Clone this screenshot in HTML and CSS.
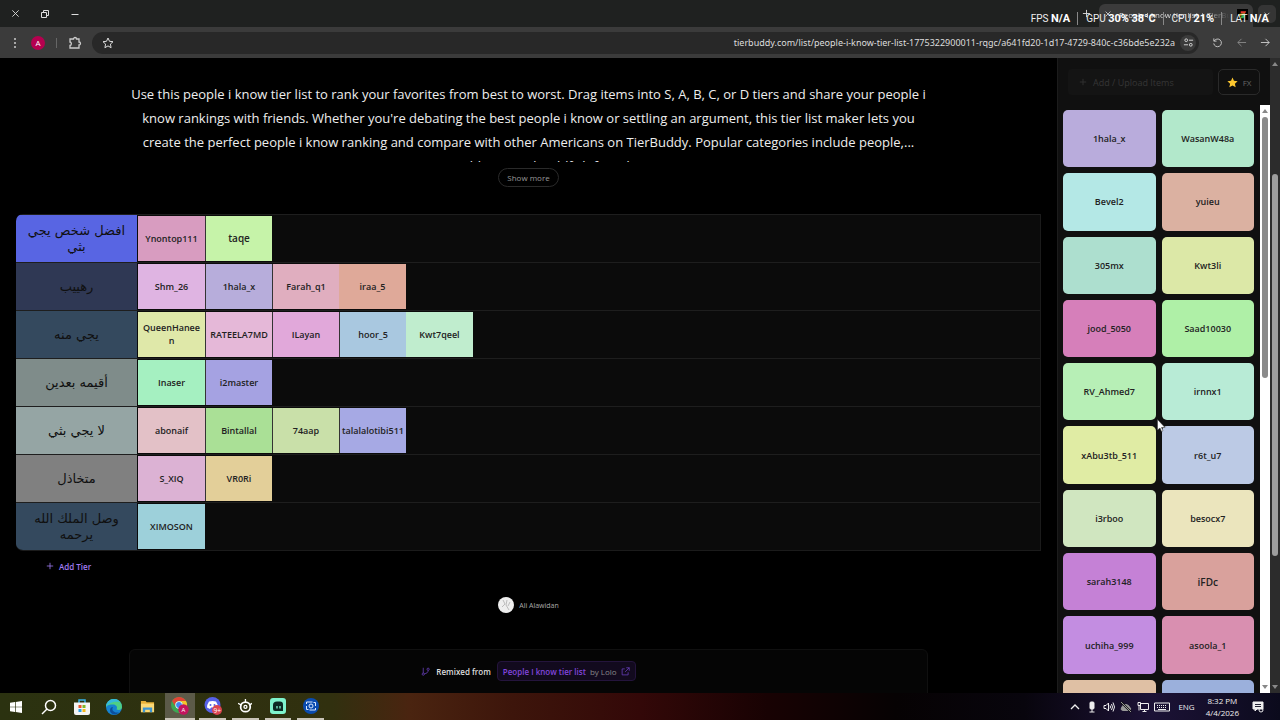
FILE: index.html
```html
<!doctype html>
<html lang="en-US">
  <head>
    <meta charset="utf-8" />
    <title>People I know tier list | TierBuddy</title>
    <link rel="stylesheet" href="styles.css">
  </head>

  <body>
    <header class="titlebar">
      <div class="window-controls">
        <button aria-label="Close"><svg viewBox="0 0 10 10" width="9" height="9"><path d="M1.5 1.5l7 7M8.500 1.500l-7 7"/></svg></button>
        <button aria-label="Restore"><svg viewBox="0 0 10 10" width="10" height="10"><path d="M1.500 3.500h5v5h-5zM3.500 3.500v-2h5v5h-2"/></svg></button>
        <button aria-label="Minimize"><svg viewBox="0 0 10 10" width="10" height="10"><path d="M1.500 5.500h7"/></svg></button>
      </div>
      <div class="tabs">
        <button class="new-tab" aria-label="New tab"><svg viewBox="0 0 10 10" width="9" height="9"><path d="M5 1v8M1 5h8"/></svg></button>
        <div class="tab">
          <button aria-label="Close tab"><svg viewBox="0 0 10 10" width="8" height="8"><path d="M2 2l6 6M8 2l-6 6"/></svg></button>
          <span class="tab-title">People I know tier list | TierBuddy</span>
          <svg class="favicon" viewBox="0 0 12 12" width="11" height="11"><rect width="12" height="12" fill="#000"/><path d="M4 2.500h6l-1 2H4z" fill="#e33b2e"/><path d="M2 5.500l7-1-2 2.500H3z" fill="#f2c12e"/><path d="M5 7l4-1-2 4H4z" fill="#35b04a"/></svg>
        </div>
        <button class="tab-search" aria-label="Search tabs"><svg viewBox="0 0 10 10" width="8" height="8"><path d="M2 3.500l3 3 3-3"/></svg></button>
      </div>
    </header>

    <!-- Performance overlay -->
    <div class="stats">
      <span>FPS <b>N/A</b></span>
      <span>GPU <b>30%</b> <b>38°C</b></span>
      <span>CPU <b>21%</b></span>
      <span>LAT <b>N/A</b></span>
    </div>

    <nav class="toolbar">
      <button aria-label="Menu"><svg viewBox="0 0 12 12" width="12" height="12"><g class="dots"><circle cx="6" cy="2" r="1"/><circle cx="6" cy="6" r="1"/><circle cx="6" cy="10" r="1"/></g></svg></button>
      <button class="profile">A</button>
      <span class="divider"></span>
      <button aria-label="Extensions"><svg viewBox="0 0 14 14" width="14" height="14"><path d="M2 3h3.500c0-2 3-2 3 0H11v3c2 0 2 3 0 3v3H2V9.500c1.800 0 1.800-3.500 0-3.500z" stroke-width="1.300"/></svg></button>
      <div class="address">
        <button aria-label="Bookmark"><svg viewBox="0 0 12 12" width="12" height="12"><path d="M6 1l1.500 3.300 3.500.4-2.600 2.400.7 3.600L6 8.900l-3.100 1.800.7-3.600L1 4.700l3.500-.4z"/></svg></button>
        <input type="text" aria-label="Address" value="tierbuddy.com/list/people-i-know-tier-list-1775322900011-rqgc/a641fd20-1d17-4729-840c-c36bde5e232a">
        <button class="site-info" aria-label="Site information"><svg viewBox="0 0 12 12" width="11" height="11"><circle cx="3.500" cy="3.500" r="1.500"/><circle cx="8.500" cy="8.500" r="1.500"/><path d="M6.500 3.500H11M1 8.500h4.500"/></svg></button>
      </div>
      <button aria-label="Reload"><svg viewBox="0 0 12 12" width="11" height="11"><path d="M2 1.500v3h3M2.300 4.500a4.200 4.200 0 1 1-.4 2.500"/></svg></button>
      <button class="dim" aria-label="Forward"><svg viewBox="0 0 12 12" width="11" height="11"><path d="M11 6H2M6 2L2 6l4 4"/></svg></button>
      <button aria-label="Back"><svg viewBox="0 0 12 12" width="11" height="11"><path d="M1 6h9M6 2l4 4-4 4"/></svg></button>
    </nav>

    <div class="page">
      <main>
        <p class="description">Use this people i know tier list to rank your favorites from best to worst. Drag items into S, A, B, C, or D tiers and share your people i<br>know rankings with friends. Whether you're debating the best people i know or settling an argument, this tier list maker lets you<br>create the perfect people i know ranking and compare with other Americans on TierBuddy. Popular categories include people,...<br>trivia, athletes, and Goldfish friends</p>
        <button class="show-more">Show more</button>

        <div class="tiers">
          <div class="tier">
            <div class="label indigo" lang="ar" dir="rtl">افضل شخص يجي بثي</div>
            <div class="tile" style="background: #d89cc0">Ynontop111</div>
            <div class="tile big" style="background: #c6f3a9">taqe</div>
          </div>
          <div class="tier">
            <div class="label navy" lang="ar" dir="rtl">رهييب</div>
            <div class="tile" style="background: #dfb4e2">Shm_26</div>
            <div class="tile" style="background: #b7addb">1hala_x</div>
            <div class="tile" style="background: #e0aebf">Farah_q1</div>
            <div class="tile joined" style="background: #dfa999">iraa_5</div>
          </div>
          <div class="tier">
            <div class="label steel" lang="ar" dir="rtl">يجي منه</div>
            <div class="tile" style="background: #dfe8a9">QueenHaneen</div>
            <div class="tile" style="background: #e5b8d8">RATEELA7MD</div>
            <div class="tile" style="background: #e1a8da">ILayan</div>
            <div class="tile" style="background: #a9c8e0">hoor_5</div>
            <div class="tile joined" style="background: #c0edce">Kwt7qeel</div>
          </div>
          <div class="tier">
            <div class="label sage" lang="ar" dir="rtl">أقيمه بعدين</div>
            <div class="tile" style="background: #a5f0c1">Inaser</div>
            <div class="tile" style="background: #a5a2e2">i2master</div>
          </div>
          <div class="tier">
            <div class="label mist" lang="ar" dir="rtl">لا يجي بثي</div>
            <div class="tile" style="background: #e3c1c7">abonaif</div>
            <div class="tile" style="background: #aae096">Bintallal</div>
            <div class="tile" style="background: #c9e0a9">74aap</div>
            <div class="tile one-line" style="background: #a6a9e4">talalalotibi511</div>
          </div>
          <div class="tier">
            <div class="label gray" lang="ar" dir="rtl">متخاذل</div>
            <div class="tile" style="background: #dcb2d4">S_XIQ</div>
            <div class="tile" style="background: #e3cf99">VR0Ri</div>
          </div>
          <div class="tier">
            <div class="label steel" lang="ar" dir="rtl">وصل الملك الله يرحمه</div>
            <div class="tile" style="background: #9dd0da">XIMOSON</div>
          </div>
        </div>

        <button class="add-tier"><svg viewBox="0 0 10 10" width="8" height="8"><path d="M5 1v8M1 5h8"/></svg>Add Tier</button>

        <div class="author">
          <svg viewBox="0 0 16 16" width="16" height="16"><circle cx="8" cy="8" r="8" fill="#eee"/><path d="M5 3l2 4-3 3M9 3l-1 5 3 5M12 5l-2 4" stroke="#bbb" fill="none"/></svg>
          <span>Ali Alawidan</span>
        </div>

        <div class="remix">
          <svg class="branch" viewBox="0 0 12 12" width="9" height="9"><path d="M3 1v7M9.500 4.500c0 3-2 4-5 4.500"/><circle cx="3" cy="9.500" r="1.500"/><circle cx="9.500" cy="3" r="1.500"/></svg>
          <span>Remixed from</span>
          <a href="#"><b>People I know tier list</b> by Lolo <svg viewBox="0 0 12 12" width="9" height="9"><path d="M5 2.500H1.500v8h8V7M7 1h4v4M11 1L5.500 6.500"/></svg></a>
        </div>
      </main>

      <aside>
        <div class="actions">
          <button class="upload"><svg viewBox="0 0 10 10" width="8" height="8"><path d="M5 1v8M1 5h8"/></svg>Add / Upload Items</button>
          <button class="fx"><svg viewBox="0 0 12 12" width="11" height="11"><path d="M6 .5l1.600 3.700 4 .4-3 2.700.9 4L6 9.200l-3.500 2.100.9-4-3-2.700 4-.4z"/></svg>FX</button>
        </div>
        <div class="pool">
          <div class="items">
            <div class="item" style="background: #b9acdc">1hala_x</div>
            <div class="item" style="background: #b2e8cb">WasanW48a</div>
            <div class="item" style="background: #b4e8e6">Bevel2</div>
            <div class="item" style="background: #dbb1a1">yuieu</div>
            <div class="item" style="background: #addfcf">305mx</div>
            <div class="item" style="background: #dce8a7">Kwt3li</div>
            <div class="item" style="background: #d67fba">jood_5050</div>
            <div class="item" style="background: #aff0a7">Saad10030</div>
            <div class="item" style="background: #b7efb6">RV_Ahmed7</div>
            <div class="item" style="background: #b8ebd6">irnnx1</div>
            <div class="item" style="background: #e0eca4">xAbu3tb_511</div>
            <div class="item" style="background: #bccae5">r6t_u7</div>
            <div class="item" style="background: #d0e6c0">i3rboo</div>
            <div class="item" style="background: #ebe5bd">besocx7</div>
            <div class="item" style="background: #c581d6">sarah3148</div>
            <div class="item big" style="background: #d9a19c">iFDc</div>
            <div class="item" style="background: #c38de1">uchiha_999</div>
            <div class="item" style="background: #d98fb0">asoola_1</div>
            <div class="item" style="background: #dfc0a4"></div>
            <div class="item" style="background: #9bb0dc"></div>
          </div>
          <div class="scrollbar light"><i class="up"></i><i class="thumb"></i><i class="down"></i></div>
        </div>
      </aside>
      <div class="scrollbar dark"><i class="up"></i><i class="thumb"></i><i class="down"></i></div>
    </div>

    <footer class="taskbar">
      <div class="apps">
        <button aria-label="Start"><svg viewBox="0 0 12 12" width="12" height="12"><path fill="#fff" d="M0 1.800l5-.7v4.600H0zM5.700 1l6.300-.9v5.600H5.700zM0 6.300h5v4.600l-5-.7zM5.700 6.300H12v5.600L5.700 11z"/></svg></button>
        <button aria-label="Search"><svg viewBox="0 0 16 16" width="16" height="16"><circle cx="9.500" cy="6.500" r="5" fill="none" stroke="#fff" stroke-width="1.500"/><path d="M6 10l-5 5" stroke="#fff" stroke-width="1.500"/></svg></button>
        <button aria-label="Store"><svg viewBox="0 0 16 16" width="16" height="16"><path d="M5 4V1h6v3" fill="none" stroke="#39b2e8" stroke-width="1.500"/><path d="M0 3.500h16V14q0 2-2 2H2q-2 0-2-2z" fill="#f4f4f4"/><path fill="#e8532b" d="M4.500 6h3v3h-3z"/><path fill="#7fb927" d="M8.500 6h3v3h-3z"/><path fill="#2a9fe5" d="M4.500 10h3v3h-3z"/><path fill="#f6b81a" d="M8.500 10h3v3h-3z"/></svg></button>
        <button aria-label="Edge"><svg viewBox="0 0 16 16" width="16" height="16"><circle cx="8" cy="8" r="8" fill="#1683d0"/><path d="M0 8a8 8 0 0 1 16 0c0 3-3 3.500-5.500 2.500C12 8 10 5.500 7 5.500S1 6 0 8z" fill="#4fcf85"/><path d="M0 8a8 8 0 0 1 8-8c3 0 5 1.500 6 3C9 2 3 3 0 8z" fill="#35b9dd"/><path d="M7 8c-2 3 1 6 6 5.500-3 3-8 2.500-9-1.500 0-3 1-4 3-4z" fill="#0c4f9c"/></svg></button>
        <button aria-label="File Explorer"><svg viewBox="0 0 16 16" width="15" height="15"><path d="M1 2h5l1 1.500h8V14H1z" fill="#e8b23a"/><path d="M1 5h14v9H1z" fill="#fbd976"/><path d="M3 14V9h10v5h-2.500v-2.500h-5V14z" fill="#3d96d4"/></svg></button>
        <button class="running active" aria-label="Chrome"><svg viewBox="0 0 18 18" width="18" height="18"><circle cx="8" cy="8" r="8" fill="#3da653"/><path d="M1.100 4A8 8 0 0 1 15 4H8a4 4 0 0 0-4 5z" fill="#e24436"/><path d="M15 4a8 8 0 0 1-7 12l3.500-6A4 4 0 0 0 8 4z" fill="#f6c42c"/><circle cx="8" cy="8" r="3.700" fill="#fff"/><circle cx="8" cy="8" r="2.900" fill="#4285f0"/><circle cx="12.500" cy="12.500" r="5.200" fill="#c2145e"/><text x="10.500" y="15" font-size="6" fill="#fff">A</text></svg></button>
        <button class="running" aria-label="Discord"><svg viewBox="0 0 18 18" width="18" height="18"><circle cx="8.500" cy="8" r="8" fill="#5661e8"/><path d="M5 4.500q3.500-1 7 0 2 3 2 6l-3 1.500-1-1.500H7L6 12l-3-1.500q0-3 2-6z" fill="#fff"/><circle cx="6.500" cy="8" r="1" fill="#5661e8"/><circle cx="10.500" cy="8" r="1" fill="#5661e8"/><circle cx="13" cy="13" r="5" fill="#dc4450"/><text x="9.500" y="15.500" font-size="6.500" fill="#fff">9+</text></svg></button>
        <button class="running" aria-label="SteelSeries"><svg viewBox="0 0 16 16" width="14" height="14"><g fill="none" stroke="#fff"><circle cx="8.500" cy="9" r="5.500" stroke-width="2"/><circle cx="8.500" cy="9" r="1.700" stroke-width="1.500"/><path d="M8.500 0v4M0 5l4 2M16 5l-3 2" stroke-width="1.500"/></g></svg></button>
        <button class="running" aria-label="Streamlabs"><svg viewBox="0 0 16 16" width="16" height="16"><rect width="16" height="16" rx="3" fill="#7ff3cd"/><path d="M3 7q0-3.500 4-3.500h3q3 0 3 3V13H5q-2 0-2-2z" fill="#0c2924"/><path d="M7 8v2.500M10 8v2.500" stroke="#7ff3cd" stroke-width="1.300"/></svg></button>
        <button class="running" aria-label="Capture"><svg viewBox="0 0 16 16" width="16" height="16"><circle cx="8" cy="8" r="8" fill="#0a4bb0"/><path d="M3.500 6V4h6M12.500 10v2h-6M12.500 8V4.500h-2M3.500 8v3.500h2" stroke="#d8e9ff" fill="none"/><circle cx="8" cy="8" r="2" fill="none" stroke="#d8e9ff"/></svg></button>
      </div>
      <div class="tray">
        <svg viewBox="0 0 12 12" width="12" height="12"><path d="M2 8l4-4 4 4" stroke-width="1.300"/></svg>
        <svg viewBox="0 0 12 12" width="12" height="12"><rect class="solid" x="4" y="1" width="4" height="7" rx="1"/><path d="M6 8v3M3.500 11h5"/></svg>
        <svg viewBox="0 0 12 12" width="12" height="12"><path d="M1 4.500h2L5.500 2v8L3 7.500H1zM7 4.500q1 1.500 0 3M8.500 3q2 3 0 6M10 1.500q3 4.500 0 9"/></svg>
        <svg class="faded" viewBox="0 0 12 12" width="12" height="12"><path class="solid" d="M3 9.500Q0 9 1.500 6.500 3 3 6 3.500t3.500 2.500q2.500 2 0 3.500z"/><path d="M1 1l10 10" stroke="#111" stroke-width="2"/><path d="M1 1l10 10"/></svg>
        <svg viewBox="0 0 12 12" width="12" height="12"><path d="M3.500 2.500h8v6h-8zM5.500 10.500h4M7.500 8.500v2M1 1.500h2.500v3H1zM2 4.500v5"/></svg>
        <svg viewBox="0 0 16 10" width="16" height="10"><path d="M.5 1h15v8H.5z"/><path d="M3 3.500h10M3 5.500h10" stroke-dasharray="1 1"/><path d="M4 7.500h8"/></svg>
        <span>ENG</span>
        <time>8:32 PM<br>4/4/2026</time>
        <svg viewBox="0 0 12 12" width="12" height="12"><path class="solid" d="M1 1h10v7H5L3 10V8H1z"/><path d="M3 3.500h6M3 5.500h6" stroke="#223"/><circle cx="9" cy="9" r="2"/></svg>
      </div>
    </footer>

    <svg class="cursor" viewBox="0 0 9 13" width="9" height="13"><path d="M.5.5v10.500l2.500-2 1.500 3.500 1.500-.7L4.500 8.500H8z" fill="#fff" stroke="#333" stroke-width=".5"/></svg>
  </body>
</html>
```
FILE: styles.css
```css
* {
  box-sizing: border-box;
}

body {
  display: flex;
  flex-direction: column;
  height: 100vh;
  margin: 0;
  overflow: hidden;
  background-color: #000;
  color: #ddd;
  font-family: 'Open Sans', 'Noto Sans', 'DejaVu Sans', sans-serif;
  font-size: 9px;
}

button {
  display: flex;
  justify-content: center;
  align-items: center;
  flex: none;
  padding: 0;
  border: none;
  background: none;
  color: inherit;
  font: inherit;
}

svg {
  flex: none;
  fill: none;
  stroke: currentColor;
}

svg .solid {
  fill: currentColor;
}

svg .dots {
  fill: currentColor;
  stroke: none;
}

/* Browser title bar */
.titlebar {
  display: flex;
  justify-content: space-between;
  height: 27px;
  flex: none;
  background-color: #1f2120;
}

.window-controls {
  display: flex;
}

.window-controls button {
  width: 30px;
}

.tabs {
  display: flex;
  align-items: center;
  padding-right: 4px;
}

.new-tab {
  width: 26px;
}

.tab {
  display: flex;
  align-items: center;
  gap: 7px;
  width: 154px;
  height: 23px;
  margin-right: 5px;
  padding: 0 5px 3px;
  border-radius: 6px 6px 0 0;
  background-color: #3b3b3b;
  align-self: flex-end;
}

.tab-title {
  flex: 1;
  overflow: hidden;
  white-space: nowrap;
  font-size: 8px;
  mask-image: linear-gradient(to right, #000 75%, transparent);
}

.favicon {
  stroke: none;
}

.tab-search {
  width: 18px;
  height: 18px;
  border-radius: 5px;
  background-color: #353535;
}

.stats {
  position: absolute;
  top: 12px;
  right: 11px;
  display: flex;
  color: #eee;
  font-family: Roboto, sans-serif;
  font-size: 10px;
  line-height: 13px;
}

.stats span + span {
  margin-left: 7px;
  padding-left: 8px;
  border-left: 1px solid #888;
}

.stats b {
  color: #fff;
  font-size: 11px;
}

/* Toolbar */
.toolbar {
  display: flex;
  align-items: center;
  height: 31px;
  flex: none;
  padding: 0 3px;
  background-color: #3b3b3b;
}

.toolbar > button {
  width: 24px;
  height: 24px;
  color: #ccc;
}

.toolbar .profile {
  width: 14px;
  height: 14px;
  margin: 0 11px 0 4px;
  border-radius: 50%;
  background-color: #b5004f;
  color: #fff;
  font-size: 8px;
}

.toolbar .dim {
  color: #888;
}

.divider {
  width: 1px;
  height: 10px;
  margin-right: 6px;
  background-color: #666;
}

.address {
  display: flex;
  align-items: center;
  flex: 1;
  height: 22px;
  margin: 0 6px 0 5px;
  padding: 0 3px 0 10px;
  border-radius: 11px;
  background-color: #282828;
}

.address input {
  flex: 1;
  padding: 0 5px;
  border: none;
  background: none;
  color: #ddd;
  font-family: 'Noto Sans', sans-serif;
  font-size: 9px;
  text-align: right;
}

.site-info {
  width: 16px;
  height: 16px;
  border-radius: 50%;
  background-color: #3b3b3b;
}

/* Page */
.page {
  display: flex;
  flex: 1;
  min-height: 0;
}

main {
  display: flex;
  flex-direction: column;
  align-items: center;
  flex: 1;
  min-width: 0;
  padding: 24px 16px 0;
  overflow: hidden;
}

.description {
  flex: none;
  height: 80px;
  margin: 0;
  overflow: hidden;
  color: #eee;
  font-size: 13px;
  line-height: 24px;
  text-align: center;
  white-space: nowrap;
}

.show-more {
  height: 19px;
  margin: 6px 0 27px;
  padding: 0 8px;
  border: 1px solid #2a2a2a;
  border-radius: 10px;
  color: #999;
  font-size: 8px;
}

.tiers {
  width: 100%;
  flex: none;
  overflow: hidden;
  border-right: 1px solid #1b1b1b;
  border-bottom: 1px solid #1b1b1b;
  border-radius: 7px 0 0 7px;
  background-color: #0b0b0b;
}

.tier {
  display: flex;
  height: 48px;
  border-top: 1px solid #1e1e1e;
}

.label {
  display: flex;
  justify-content: center;
  align-items: center;
  width: 121px;
  margin-right: 1px;
  padding: 0 8px;
  color: #101010;
  font-family: 'DejaVu Sans', sans-serif;
  font-size: 13px;
  line-height: 16px;
  text-align: center;
}

.indigo { background-color: #5865e3; }
.navy { background-color: #2f3854; }
.steel { background-color: #34495e; }
.sage { background-color: #7f8c8a; }
.mist { background-color: #95a5a4; }
.gray { background-color: #808080; }

.tile {
  display: flex;
  justify-content: center;
  align-items: center;
  width: 67px;
  height: 45px;
  margin-top: 1px;
  padding: 0 3px 1px;
  color: #222;
  font-weight: 600;
  line-height: 13px;
  text-align: center;
  word-break: break-all;
}

.tile + .tile {
  border-left: 1px solid #333;
}

.tile + .joined {
  border-left: none;
}

.tile.one-line {
  white-space: nowrap;
}

.tile.big,
.item.big {
  font-size: 10px;
}

.add-tier {
  align-self: flex-start;
  gap: 5px;
  height: 18px;
  margin: 6px 0 0 30px;
  color: #a07cf0;
  font-size: 8px;
  font-weight: 600;
}

.author {
  display: flex;
  align-items: center;
  gap: 5px;
  margin-top: 22px;
  color: #aaa;
  font-size: 7px;
}

.author svg {
  stroke: none;
}

.remix {
  display: flex;
  justify-content: center;
  align-items: center;
  gap: 6px;
  width: 100%;
  max-width: 799px;
  height: 60px;
  flex: none;
  margin-top: 36px;
  padding-bottom: 16px;
  border: 1px solid #101010;
  border-radius: 6px 6px 0 0;
  background-color: #050505;
  font-size: 8px;
  font-weight: 600;
}

.branch {
  color: #6b42c0;
}

.remix a {
  display: flex;
  align-items: center;
  gap: 4px;
  height: 20px;
  padding: 0 5px;
  border: 1px solid #24143c;
  border-radius: 4px;
  background-color: #120a1e;
  color: #888;
  font-weight: 400;
  text-decoration: none;
}

.remix b {
  color: #8145dc;
  font-weight: 600;
}

.remix a svg {
  color: #6b42c0;
}

/* Item pool */
aside {
  display: flex;
  flex-direction: column;
  width: 213px;
  flex: none;
  border-left: 1px solid #1c1c1c;
  background-color: #101010;
}

.actions {
  display: flex;
  gap: 5px;
  height: 47px;
  flex: none;
  padding: 11px 10px 10px;
}

.upload {
  flex: 1;
  justify-content: flex-start;
  gap: 6px;
  padding-left: 11px;
  border-radius: 4px;
  background-color: #141414;
  color: #363636;
}

.fx {
  gap: 5px;
  width: 42px;
  border: 1px solid #2a2a2a;
  border-radius: 5px;
  color: #666;
  font-size: 8px;
}

.fx svg {
  fill: #fcc72f;
  stroke: none;
}

.pool {
  display: flex;
  flex: 1;
  min-height: 0;
}

.items {
  display: grid;
  grid-template-columns: 1fr 1fr;
  align-content: start;
  gap: 6px;
  flex: 1;
  padding: 5px 6px 0 5px;
  overflow: hidden;
}

.item {
  display: flex;
  justify-content: center;
  align-items: center;
  aspect-ratio: 92 / 57;
  border-radius: 5px;
  color: #222;
  font-weight: 600;
}

.scrollbar {
  display: flex;
  flex-direction: column;
  align-items: center;
  width: 10px;
  flex: none;
  padding: 4px 0;
}

.scrollbar i {
  border: 3px solid transparent;
}

.scrollbar .up {
  border-top: none;
  border-bottom: 4px solid #888;
}

.scrollbar .down {
  margin-top: auto;
  border-bottom: none;
  border-top: 4px solid #888;
}

.scrollbar .thumb {
  width: 6px;
  border: none;
  border-radius: 3px;
  background-color: #8b8b8b;
}

.light {
  background-color: #fff;
}

.light .thumb {
  height: 45%;
  margin-top: 4px;
}

.dark {
  background-color: #2c2c2c;
}

.dark .thumb {
  height: 61%;
  margin-top: 108px;
  background-color: #9d9d9d;
}

/* Taskbar */
.taskbar {
  display: flex;
  justify-content: space-between;
  height: 27px;
  flex: none;
  background: linear-gradient(to right, #2b3210 0, #31300f 26%, #4a2410 32%, #3d150b 40%, #330808 50%, #180203 60%, #060203 70%, #08050d 80%, #1c1236 90%, #0b0a1c 100%);
}

.apps {
  display: grid;
  grid-template-columns: repeat(10, 1fr);
  width: 327px;
}

.apps svg {
  stroke: none;
}

.apps .running {
  margin: 0 3px;
  border-bottom: 2px solid #c9c4b8;
}

.apps .active {
  margin: 0 1px;
  background-color: #5c5a48;
}

.tray {
  display: flex;
  align-items: center;
  gap: 5px;
  padding-right: 16px;
  color: #eee;
  font-size: 8px;
}

.tray span {
  margin: 0 6px 0 3px;
}

.tray time {
  margin-right: 8px;
  line-height: 12px;
  text-align: center;
}

.faded {
  color: #999;
}

.cursor {
  position: absolute;
  top: 419px;
  left: 1157px;
}
```
